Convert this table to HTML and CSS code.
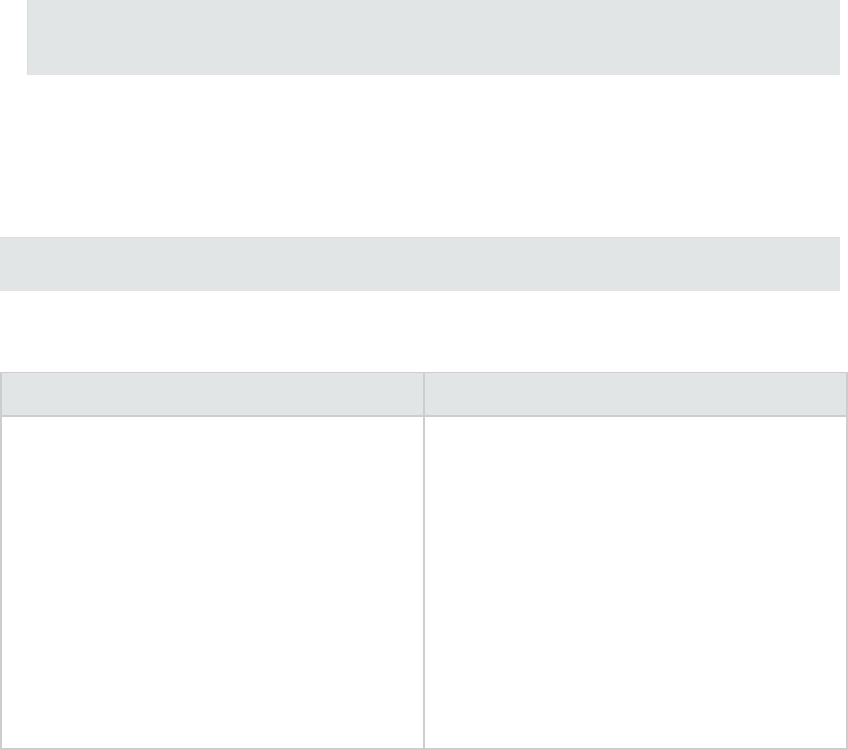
FILE: index.html
```html
<!DOCTYPE html>
<html>
<head>
<meta charset="utf-8">
<link rel="stylesheet" href="styles.css">
</head>
<body>
<div class="page">
  <div class="panel-top"></div>
  <div class="panel-bar"></div>
  <div class="grid-table">
    <div class="th th-left"></div>
    <div class="th"></div>
    <div class="td td-left"></div>
    <div class="td"></div>
  </div>
</div>
</body>
</html>
```
FILE: styles.css
```css
html, body {
  margin: 0;
  padding: 0;
  background: #ffffff;
  font-family: "Liberation Sans", Arial, sans-serif;
}
.page {
  display: flex;
  flex-direction: column;
  width: 848px;
}
.panel-top {
  margin-left: 27px;
  width: 813px;
  height: 75px;
  background: #e1e5e5;
  box-sizing: border-box;
  border-left: 1px solid #dadede;
}
.panel-bar {
  margin-top: 162px;
  width: 840px;
  height: 54px;
  background: #e1e5e5;
  box-sizing: border-box;
  border-top: 1px solid #dadede;
}
.grid-table {
  margin-top: 81px;
  width: 848px;
  box-sizing: border-box;
  display: grid;
  grid-template-columns: 423px 421px;
  grid-template-rows: 44px 331px;
  border-left: 2px solid #cdcdcd;
  border-top: 1px solid #cdcdcd;
  border-right: 2px solid #cdcdcd;
  border-bottom: 2px solid #cdcdcd;
}
.th {
  background: #e1e5e5;
  border-bottom: 2px solid #cdcdcd;
}
.th-left, .td-left {
  border-right: 2px solid #cdcdcd;
  box-sizing: border-box;
}
.td {
  background: #ffffff;
}
```
